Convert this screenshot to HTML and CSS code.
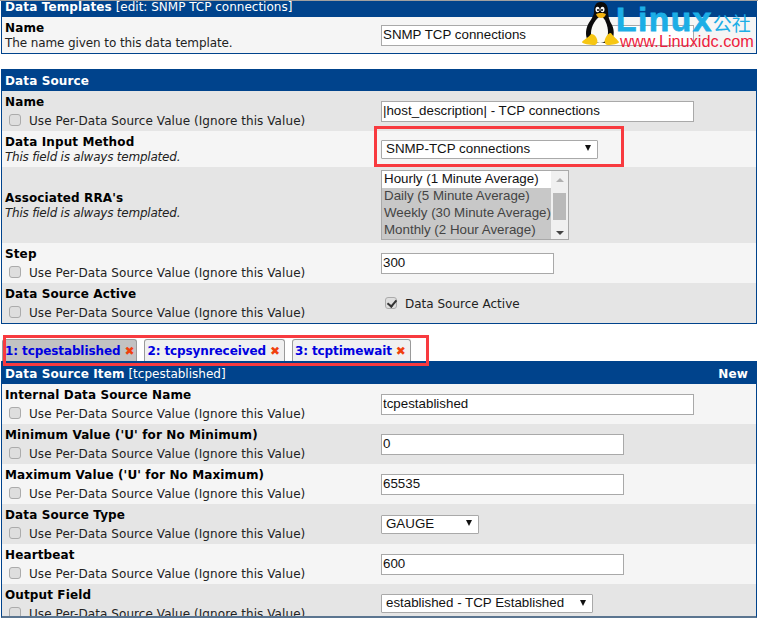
FILE: index.html
```html
<!DOCTYPE html>
<html lang="en">
<head>
<meta charset="utf-8">
<title>Data Templates</title>
<link rel="stylesheet" href="styles.css">
</head>
<body>
<div class="page">
  <section class="panel panel-top">
    <div class="head head-top"><span><b>Data Templates</b> [edit: SNMP TCP connections]</span></div>
    <div class="row odd h36">
      <div class="label"><b>Name</b><span class="desc">The name given to this data template.</span></div>
      <div class="field"><input class="text w-top" type="text" value="SNMP TCP connections"></div>
    </div>
  </section>

  <section class="panel panel-source">
    <div class="head head-source"><b>Data Source</b></div>
    <div class="row even h40">
      <div class="label with-check"><b>Name</b><label class="per"><input class="check" type="checkbox">Use Per-Data Source Value (Ignore this Value)</label></div>
      <div class="field"><input class="text w-long" type="text" value="|host_description| - TCP connections"></div>
    </div>
    <div class="row odd h36">
      <div class="label"><b>Data Input Method</b><i class="desc">This field is always templated.</i></div>
      <div class="field"><div class="select w-method"><span>SNMP-TCP connections</span><span class="arrow"></span></div></div>
    </div>
    <div class="row even h76">
      <div class="label"><b>Associated RRA's</b><i class="desc">This field is always templated.</i></div>
      <div class="field">
        <div class="listbox">
          <div class="options">
            <div class="opt">Hourly (1 Minute Average)</div>
            <div class="opt sel">Daily (5 Minute Average)</div>
            <div class="opt sel">Weekly (30 Minute Average)</div>
            <div class="opt sel">Monthly (2 Hour Average)</div>
          </div>
          <div class="scroll"><span class="up"></span><span class="thumb"></span><span class="down"></span></div>
        </div>
      </div>
    </div>
    <div class="row odd h40">
      <div class="label with-check"><b>Step</b><label class="per"><input class="check" type="checkbox">Use Per-Data Source Value (Ignore this Value)</label></div>
      <div class="field"><input class="text w-step" type="text" value="300"></div>
    </div>
    <div class="row even h40">
      <div class="label with-check"><b>Data Source Active</b><label class="per"><input class="check" type="checkbox">Use Per-Data Source Value (Ignore this Value)</label></div>
      <div class="field"><label class="active"><input class="check" type="checkbox" checked>Data Source Active</label></div>
    </div>
  </section>

  <nav class="tabs">
    <a class="tab current">1: tcpestablished<span class="x">✖</span></a>
    <a class="tab">2: tcpsynreceived<span class="x">✖</span></a>
    <a class="tab">3: tcptimewait<span class="x">✖</span></a>
  </nav>

  <section class="panel panel-item">
    <div class="head head-item"><span><b>Data Source Item</b> [tcpestablished]</span><b>New</b></div>
    <div class="row odd h40">
      <div class="label with-check"><b>Internal Data Source Name</b><label class="per"><input class="check" type="checkbox">Use Per-Data Source Value (Ignore this Value)</label></div>
      <div class="field"><input class="text w-long" type="text" value="tcpestablished"></div>
    </div>
    <div class="row even h40">
      <div class="label with-check"><b>Minimum Value ('U' for No Minimum)</b><label class="per"><input class="check" type="checkbox">Use Per-Data Source Value (Ignore this Value)</label></div>
      <div class="field"><input class="text w-mid" type="text" value="0"></div>
    </div>
    <div class="row odd h40">
      <div class="label with-check"><b>Maximum Value ('U' for No Maximum)</b><label class="per"><input class="check" type="checkbox">Use Per-Data Source Value (Ignore this Value)</label></div>
      <div class="field"><input class="text w-mid" type="text" value="65535"></div>
    </div>
    <div class="row even h40">
      <div class="label with-check"><b>Data Source Type</b><label class="per"><input class="check" type="checkbox">Use Per-Data Source Value (Ignore this Value)</label></div>
      <div class="field"><div class="select w-gauge"><span>GAUGE</span><span class="arrow"></span></div></div>
    </div>
    <div class="row odd h40">
      <div class="label with-check"><b>Heartbeat</b><label class="per"><input class="check" type="checkbox">Use Per-Data Source Value (Ignore this Value)</label></div>
      <div class="field"><input class="text w-mid" type="text" value="600"></div>
    </div>
    <div class="row even clip">
      <div class="label with-check"><b>Output Field</b><label class="per"><input class="check" type="checkbox">Use Per-Data Source Value (Ignore this Value)</label></div>
      <div class="field"><div class="select w-output"><span>established - TCP Established</span><span class="arrow"></span></div></div>
    </div>
  </section>

  <div class="callout callout-method"></div>
  <div class="callout callout-tabs"></div>

  <div class="logo">
    <svg class="tux" viewBox="0 0 40 46" width="40" height="46" aria-hidden="true">
      <path d="M19 0C13 0 12 5 12 10C12 15 7 19 5 25C3 31 4 38 8 41L28 41C32 37 33 29 30 23C27 18 26 14 26 9C26 3 23 0 19 0Z" fill="#0b0b0b"/>
      <path d="M19 14C14 16 9 24 9 31C9 38 13 41 18 41C24 41 26 36 26 30C26 24 23 16 19 14Z" fill="#fbfbf6"/>
      <ellipse cx="15.500" cy="7.500" rx="2" ry="2.800" fill="#fff"/>
      <ellipse cx="20.500" cy="7.500" rx="2" ry="2.800" fill="#fff"/>
      <circle cx="16" cy="8" r="1" fill="#000"/>
      <circle cx="20" cy="8" r="1" fill="#000"/>
      <path d="M14 12C16 10.500 22 10.500 24 12C23 15 21 16 19 16C17 16 15 15 14 12Z" fill="#f3b411"/>
      <path d="M9 32C6 36 1 38 0 40C0 42 8 43 13 43C16 42 16 38 14 35C13 33 11 32 9 32Z" fill="#f6c613"/>
      <path d="M29 31C31 34 36 38 37 40C37 42 30 43 26 43C22 43 22 38 24 35C25 33 27 31 29 31Z" fill="#f6c613"/>
    </svg>
    <div class="brand"><span class="linux">Linux</span><span class="gong">公社</span></div>
    <div class="url">www.Linuxidc.com</div>
  </div>
</div>
</body>
</html>
```

FILE: styles.css
```css
* { box-sizing: border-box; }
html, body { margin: 0; padding: 0; height: 100%; overflow: hidden; background: #fff; }
.page {
  position: relative;
  width: 758px;
  height: 618px;
  overflow: hidden;
  padding: 0 1px;
  border-top: 1px solid #a0a0a0;
  font-family: Verdana, "DejaVu Sans", sans-serif;
  font-size: 12px;
  color: #111;
}
.panel { width: 756px; border: 1px solid #00438c; border-top: 0; }
.panel-top { height: 53px; }
.panel-source { margin-top: 15px; }
.panel-item { height: 257px; overflow: hidden; border-bottom: 2px solid #5b7590; }

.head {
  display: flex;
  justify-content: space-between;
  align-items: center;
  padding: 0 8px 0 3px;
  background: #00438c;
  color: #fff;
  font-size: 12px;
}
.head b { font-size: 12px; letter-spacing: 0.01em; }
.head-top { height: 16px; padding-bottom: 4px; }
.head-source { height: 22px; padding-top: 1px; }
.head-item { height: 23px; padding-top: 3px; }

.row { display: flex; align-items: center; padding-left: 3px; }
.odd { background: #f5f5f5; }
.even { background: #e5e5e5; }
.h36 { height: 36px; }
.h40 { height: 40px; }
.h76 { height: 76px; }
.clip { height: 32px; align-items: flex-start; overflow: hidden; }
.clip .label { padding-top: 3px; }
.clip .field { padding-top: 10px; }

.label { width: 376px; flex: none; display: flex; flex-direction: column; }
.with-check { padding-top: 2px; }
.label b { font-size: 12px; line-height: 16px; color: #000; letter-spacing: 0.01em; }
.desc { line-height: 15px; font-size: 12px; color: #222; letter-spacing: -0.1px; }
i.desc { letter-spacing: -0.22px; }
.per { display: flex; align-items: center; height: 20px; font-size: 12px; color: #222; padding-top: 2px; letter-spacing: 0.07px; }

.check {
  appearance: none;
  -webkit-appearance: none;
  position: relative;
  flex: none;
  width: 12px;
  height: 12px;
  margin: 0 8px 2px 4px;
  border: 1px solid #ababab;
  border-radius: 3px;
  background: #dedede;
}
.check:checked::after {
  content: "";
  position: absolute;
  left: 3px;
  top: 0;
  width: 4px;
  height: 7px;
  border: solid #333;
  border-width: 0 2px 2px 0;
  transform: rotate(40deg);
}

.field { flex: 1; display: flex; align-items: center; }
.text {
  display: block;
  height: 21px;
  padding: 0 1px 2px;
  border: 1px solid #a9a9a9;
  background: #fff;
  font-family: "Liberation Sans", Arial, sans-serif;
  font-size: 13.330px;
  color: #111;
}
.w-top { width: 313px; }
.w-long { width: 313px; }
.w-mid { width: 243px; }
.w-step { width: 173px; }

.select {
  display: flex;
  align-items: center;
  justify-content: space-between;
  height: 19px;
  padding: 0 6px 2px 4px;
  border: 1px solid #a9a9a9;
  border-radius: 1px;
  background: #fff;
  font-family: "Liberation Sans", Arial, sans-serif;
  font-size: 13.330px;
  color: #111;
  white-space: nowrap;
}
.arrow {
  width: 0;
  height: 0;
  border: solid transparent;
  border-width: 6px 3px 0;
  border-top-color: #111;
}
.w-method { width: 217px; }
.w-gauge { width: 98px; }
.w-output { width: 212px; }

.listbox {
  display: flex;
  width: 188px;
  height: 70px;
  border: 1px solid #a9a9a9;
  background: #c8c8c8;
  font-family: "Liberation Sans", Arial, sans-serif;
  font-size: 13.330px;
}
.options { flex: 1; min-width: 0; white-space: nowrap; }
.opt { height: 17px; line-height: 15px; padding-left: 2px; background: #fff; color: #111; }
.opt.sel { background: #c8c8c8; color: #444; }
.scroll { flex: none; width: 17px; display: flex; flex-direction: column; align-items: center; justify-content: space-between; background: #f0f0f0; padding: 7px 0 4px; }
.thumb { width: 13px; height: 27px; background: #b9b9b9; }
.up, .down { width: 0; height: 0; border: solid transparent; }
.up { border-width: 0 4px 4px; border-bottom-color: #b0b0b0; }
.down { border-width: 4px 4px 0; border-top-color: #444; }

.active { display: flex; align-items: center; font-size: 12px; color: #222; padding-top: 1px; }

.tabs { display: flex; gap: 7px; height: 22px; margin-top: 15px; padding-left: 1px; }
.tab {
  display: flex;
  align-items: center;
  height: 22px;
  padding: 0 4px 0 2px;
  border: 1px solid #9a9a9a;
  border-bottom: 0;
  border-radius: 3px 3px 0 0;
  background: #f0f0f0;
  color: #0000e0;
  font-weight: bold;
  font-size: 12px;
  letter-spacing: -0.1px;
  white-space: nowrap;
}
.tab.current { background: #c2c2c2; padding-right: 2px; }
.x { margin-left: 4px; color: #f0400c; font-size: 12px; }

.callout { position: absolute; border: 3px solid #f83a3f; }
.callout-method { left: 374px; top: 125px; width: 250px; height: 41px; }
.callout-tabs { left: 3px; top: 334px; width: 426px; height: 31px; }

.logo { position: absolute; left: 582px; top: 1px; width: 176px; height: 48px; }
.tux { position: absolute; left: 0; top: 0; }
.brand { position: absolute; left: 34px; top: 5px; display: flex; align-items: flex-end; height: 26px; color: #1caee6; }
.linux { font: 900 33.500px/26px "Liberation Sans", Arial, sans-serif; letter-spacing: 1.500px; -webkit-text-stroke: 0.8px #1caee6; }
.gong { font: 19px/20px "Noto Sans CJK SC", sans-serif; }
.url { position: absolute; left: 38px; top: 32px; font: 16.300px/15px "Liberation Sans", Arial, sans-serif; color: #ed1c3c; white-space: nowrap; }
```
